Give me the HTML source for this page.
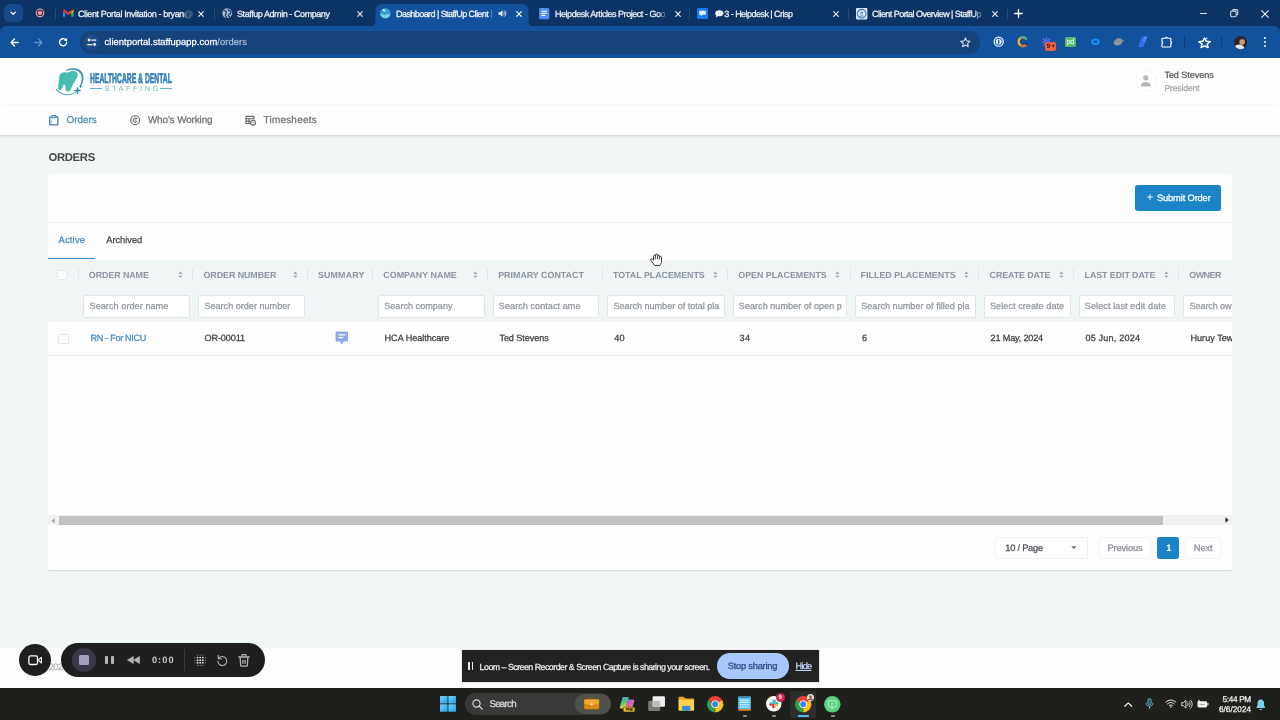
<!DOCTYPE html>
<html lang="en">
<head>
<meta charset="utf-8">
<title>Dashboard | StaffUp Client Portal</title>
<style>
html,body{margin:0;padding:0;background:#f1f6f6;}
body{text-rendering:geometricPrecision;width:1280px;height:720px;overflow:hidden;font-family:'Liberation Sans',sans-serif;}
#screen{will-change:transform;position:relative;width:1280px;height:720px;overflow:hidden;background:#f1f6f6;}
.a{position:absolute;box-sizing:border-box;}
.t{position:absolute;white-space:pre;margin:0;padding:0;-webkit-text-stroke:0.25px currentColor;}
svg{overflow:visible;}
.g{position:absolute;left:0;top:0;width:0;height:0;display:block;}

</style>
</head>
<body>
<div id="screen">
<main class="g" id="page" aria-label="Client portal">
<div class="a " style="left:0px;top:57px;width:1280px;height:48px;background:#fdfdfd;"></div>
<div class="a " style="left:0px;top:104.5px;width:1280px;height:1px;background:#f0f1f3;"></div>
<svg class="a" style="left:50px;top:62px" width="40" height="40" viewBox="0 0 40 40"><path d="M16 8.2 C22 5 29 6 32 10.5 C34.8 15 33.6 21 30.4 24.2 L29.7 23.5 C31.9 20.4 32.6 15.6 30.5 11.7 C28 7.5 22 6.7 16.4 8.9 Z" fill="#3a8fb8"/><path d="M6.2 27.4 C9 31.4 15 33.4 20 32.6 C22.4 32.2 24.4 31.2 25.6 30.2" fill="none" stroke="#55aeae" stroke-width="1.05" stroke-linecap="round"/><path d="M9.3 14.5 C9.5 11.5 12.5 9.8 15 10.2 C16.5 10.4 17.5 10.6 18.5 10.2 C21 9 24 8.6 26.2 9.8 C28 10.8 28.2 13 27.2 15.2 C25.8 18.4 23.4 21 22 24.5 C21.2 26.6 20.6 28.4 19 29.2 C17.4 29.9 16 29 15.6 27.2 C15.3 25.6 15.6 23.6 14.8 22.8 C14 22 13.4 23.2 12.8 24.6 C12.2 26.2 11.4 27.8 10 28 C8.6 28.2 8 26.8 8.1 25 C8.3 22 9.1 18 9.3 14.5 Z" fill="#45bdb0"/><path d="M27.5 26 V31.2 M24.9 28.6 H30.1" stroke="#2a86b8" stroke-width="1.5" stroke-linecap="round"/><path d="M30.7 23.4 V25.6 M29.6 24.5 H31.8" stroke="#2a86b8" stroke-width="0.8" stroke-linecap="round"/></svg>
<span class="t" style="left:90px;top:70px;font-size:13.9px;line-height:16px;color:#3380bc;font-weight:700;-webkit-text-stroke:0;transform:scaleX(0.4883);transform-origin:0 50%;-webkit-text-stroke:0.7px #3380bc;">HEALTHCARE &amp; DENTAL</span>
<div class="a " style="left:90.2px;top:88.1px;width:11.4px;height:1.1px;background:#63b3cf;"></div>
<div class="a " style="left:159.8px;top:88.1px;width:12.1px;height:1.1px;background:#63b3cf;"></div>
<span class="t" style="left:104.4px;top:84.1px;font-size:7.4px;line-height:10px;color:#72bfac;letter-spacing:2.57px;-webkit-text-stroke:0;">STAFFING</span>
<svg class="a" style="left:1134.9px;top:70.4px" width="21.6" height="21.6" viewBox="0 0 43 43"><circle cx="21.5" cy="21.5" r="20.6" fill="#fff" stroke="#f0f1f3" stroke-width="1.6"/><circle cx="21.5" cy="15.6" r="5.2" fill="#b6b6ba"/><path d="M12 30.5 C12 21.8 31 21.8 31 30.5 V31.4 C31 32.4 30.4 32.9 29.4 32.9 H13.6 C12.6 32.9 12 32.4 12 31.4 Z" fill="#b6b6ba"/></svg>
<span class="t" style="left:1164.4px;top:69.1px;font-size:9.1px;line-height:13px;color:#55595e;letter-spacing:-0.06px;">Ted Stevens</span>
<span class="t" style="left:1164.4px;top:82.4px;font-size:8.7px;line-height:12px;color:#a2a5aa;letter-spacing:-0.19px;">President</span>
<div class="a " style="left:0px;top:105.4px;width:1280px;height:29.6px;background:#fdfdfd;box-shadow:0 1px 2.5px rgba(60,70,80,.22);"></div>
<svg class="a" style="left:48.8px;top:114.6px" width="9.6" height="10.6" viewBox="0 0 19.2 21.2"><rect x="1.5" y="4" width="16.2" height="15.8" rx="1.4" fill="none" stroke="#3a7fb6" stroke-width="2.6"/><rect x="5.6" y="1.2" width="8" height="4.4" rx="1.2" fill="#fff" stroke="#3a7fb6" stroke-width="2.2"/><path d="M5.4 9.4 V15.4" stroke="#3a7fb6" stroke-width="1.6" opacity=".6"/></svg>
<span class="t" style="left:66.6px;top:113.7px;font-size:9.9px;line-height:14px;color:#4889be;letter-spacing:-0.04px;">Orders</span>
<svg class="a" style="left:129.7px;top:114.7px" width="10.4" height="10.4" viewBox="0 0 21 21"><circle cx="10.5" cy="10.5" r="9" fill="none" stroke="#65696e" stroke-width="2.3"/><path d="M13.8 7.4 A4.4 4.4 0 1 0 13.8 13.6" fill="none" stroke="#65696e" stroke-width="2.1" stroke-linecap="round"/><path d="M10.6 8.2 V11 H12.8" fill="none" stroke="#65696e" stroke-width="1.5"/></svg>
<span class="t" style="left:147.9px;top:113.7px;font-size:9.9px;line-height:14px;color:#6b6f74;letter-spacing:-0.1px;">Who&#x27;s Working</span>
<svg class="a" style="left:245.2px;top:114.6px" width="11.2" height="10.8" viewBox="0 0 23 22"><path d="M2 2.6 H18.4 V8.6 M2 2.6 V17.4 H10 M2 7.6 H18.4 M2 12.4 H10.4 M8.4 7.6 V17.4" fill="none" stroke="#65696e" stroke-width="2.5" stroke-linejoin="round"/><circle cx="16.6" cy="15.6" r="5" fill="#fff" stroke="#65696e" stroke-width="2.3"/><path d="M16.6 13 V15.8 L18.6 17" fill="none" stroke="#65696e" stroke-width="1.6"/></svg>
<span class="t" style="left:263.5px;top:113.7px;font-size:9.9px;line-height:14px;color:#6b6f74;letter-spacing:0.27px;">Timesheets</span>
<span class="t" style="left:48.4px;top:149.9px;font-size:11.3px;line-height:16px;color:#484848;font-weight:700;-webkit-text-stroke:0;letter-spacing:-0.29px;">ORDERS</span>
<div class="a " style="left:48px;top:174.2px;width:1184px;height:396px;background:#fdfdfd;border-radius:2px;box-shadow:0 1px 1px -0.5px rgba(60,80,100,.16);"></div>
<div class="a " style="left:48px;top:221.6px;width:1184px;height:1px;background:#eceff1;"></div>
<div class="a " style="left:1135.4px;top:184.8px;width:85.8px;height:26.2px;background:#1c84c6;border-radius:2.4px;"></div>
<svg class="a" style="left:1147.2px;top:194px" width="6" height="6" viewBox="0 0 6 6"><path d="M3 0.2 V5.8 M0.2 3 H5.8" stroke="#fff" stroke-width="0.9"/></svg>
<span class="t" style="left:1157px;top:191.8px;font-size:9.3px;line-height:13px;color:#ffffff;letter-spacing:-0.14px;">Submit Order</span>
<div class="a " style="left:0px;top:647.5px;width:1280px;height:41px;background:#fdfdfd;"></div>
<span class="t" style="left:48.7px;top:661.3px;font-size:9.2px;line-height:13px;color:#b4b7bc;letter-spacing:-0.52px;">2024</span>
</main>
<section class="g" id="orders-table" aria-label="Orders">
<span class="t" style="left:58.5px;top:234.4px;font-size:9.3px;line-height:13px;color:#4889be;letter-spacing:0.23px;">Active</span>
<span class="t" style="left:106.3px;top:234.4px;font-size:9.3px;line-height:13px;color:#43474c;letter-spacing:-0.04px;">Archived</span>
<div class="a " style="left:48px;top:257.8px;width:47.4px;height:1.4px;background:#2f86c4;"></div>
<div class="a " style="left:48px;top:259.6px;width:1184px;height:62.6px;background:#f0f5f6;"></div>
<div class="a " style="left:77.7px;top:268.4px;width:1px;height:12.6px;background:#e3e8ec;"></div>
<span class="t" style="left:88.8px;top:268.6px;font-size:8.9px;line-height:12px;color:#8c93a0;font-weight:700;-webkit-text-stroke:0;letter-spacing:-0.07px;">ORDER NAME</span>
<svg class="a" style="left:178.4px;top:270.9px" width="4.8" height="7.6" viewBox="0 0 4.8 7.6"><path d="M0.3 3 L2.4 0.5 L4.5 3 Z M0.3 4.6 L2.4 7.1 L4.5 4.6 Z" fill="#a3a9b3"/></svg>
<div class="a " style="left:192.1px;top:268.4px;width:1px;height:12.6px;background:#e3e8ec;"></div>
<span class="t" style="left:203.5px;top:268.6px;font-size:8.9px;line-height:12px;color:#8c93a0;font-weight:700;-webkit-text-stroke:0;letter-spacing:-0.06px;">ORDER NUMBER</span>
<svg class="a" style="left:292.90000000000003px;top:270.9px" width="4.8" height="7.6" viewBox="0 0 4.8 7.6"><path d="M0.3 3 L2.4 0.5 L4.5 3 Z M0.3 4.6 L2.4 7.1 L4.5 4.6 Z" fill="#a3a9b3"/></svg>
<div class="a " style="left:307.1px;top:268.4px;width:1px;height:12.6px;background:#e3e8ec;"></div>
<span class="t" style="left:318px;top:268.6px;font-size:8.9px;line-height:12px;color:#8c93a0;font-weight:700;-webkit-text-stroke:0;letter-spacing:0.13px;">SUMMARY</span>
<div class="a " style="left:372.1px;top:268.4px;width:1px;height:12.6px;background:#e3e8ec;"></div>
<span class="t" style="left:383.3px;top:268.6px;font-size:8.9px;line-height:12px;color:#8c93a0;font-weight:700;-webkit-text-stroke:0;letter-spacing:0.03px;">COMPANY NAME</span>
<svg class="a" style="left:472.8px;top:270.9px" width="4.8" height="7.6" viewBox="0 0 4.8 7.6"><path d="M0.3 3 L2.4 0.5 L4.5 3 Z M0.3 4.6 L2.4 7.1 L4.5 4.6 Z" fill="#a3a9b3"/></svg>
<div class="a " style="left:487.1px;top:268.4px;width:1px;height:12.6px;background:#e3e8ec;"></div>
<span class="t" style="left:498.2px;top:268.6px;font-size:8.9px;line-height:12px;color:#8c93a0;font-weight:700;-webkit-text-stroke:0;">PRIMARY CONTACT</span>
<div class="a " style="left:601.6px;top:268.4px;width:1px;height:12.6px;background:#e3e8ec;"></div>
<span class="t" style="left:613px;top:268.6px;font-size:8.9px;line-height:12px;color:#8c93a0;font-weight:700;-webkit-text-stroke:0;letter-spacing:-0.03px;">TOTAL PLACEMENTS</span>
<svg class="a" style="left:713.2px;top:270.9px" width="4.8" height="7.6" viewBox="0 0 4.8 7.6"><path d="M0.3 3 L2.4 0.5 L4.5 3 Z M0.3 4.6 L2.4 7.1 L4.5 4.6 Z" fill="#a3a9b3"/></svg>
<div class="a " style="left:727.1px;top:268.4px;width:1px;height:12.6px;background:#e3e8ec;"></div>
<span class="t" style="left:738.3px;top:268.6px;font-size:8.9px;line-height:12px;color:#8c93a0;font-weight:700;-webkit-text-stroke:0;letter-spacing:-0.02px;">OPEN PLACEMENTS</span>
<svg class="a" style="left:835.2px;top:270.9px" width="4.8" height="7.6" viewBox="0 0 4.8 7.6"><path d="M0.3 3 L2.4 0.5 L4.5 3 Z M0.3 4.6 L2.4 7.1 L4.5 4.6 Z" fill="#a3a9b3"/></svg>
<div class="a " style="left:850.3px;top:268.4px;width:1px;height:12.6px;background:#e3e8ec;"></div>
<span class="t" style="left:860.6px;top:268.6px;font-size:8.9px;line-height:12px;color:#8c93a0;font-weight:700;-webkit-text-stroke:0;letter-spacing:0.02px;">FILLED PLACEMENTS</span>
<svg class="a" style="left:963.8000000000001px;top:270.9px" width="4.8" height="7.6" viewBox="0 0 4.8 7.6"><path d="M0.3 3 L2.4 0.5 L4.5 3 Z M0.3 4.6 L2.4 7.1 L4.5 4.6 Z" fill="#a3a9b3"/></svg>
<div class="a " style="left:978.3px;top:268.4px;width:1px;height:12.6px;background:#e3e8ec;"></div>
<span class="t" style="left:989.6px;top:268.6px;font-size:8.9px;line-height:12px;color:#8c93a0;font-weight:700;-webkit-text-stroke:0;letter-spacing:-0.1px;">CREATE DATE</span>
<svg class="a" style="left:1058.8px;top:270.9px" width="4.8" height="7.6" viewBox="0 0 4.8 7.6"><path d="M0.3 3 L2.4 0.5 L4.5 3 Z M0.3 4.6 L2.4 7.1 L4.5 4.6 Z" fill="#a3a9b3"/></svg>
<div class="a " style="left:1073.3px;top:268.4px;width:1px;height:12.6px;background:#e3e8ec;"></div>
<span class="t" style="left:1084.6px;top:268.6px;font-size:8.9px;line-height:12px;color:#8c93a0;font-weight:700;-webkit-text-stroke:0;letter-spacing:-0.08px;">LAST EDIT DATE</span>
<svg class="a" style="left:1163.6px;top:270.9px" width="4.8" height="7.6" viewBox="0 0 4.8 7.6"><path d="M0.3 3 L2.4 0.5 L4.5 3 Z M0.3 4.6 L2.4 7.1 L4.5 4.6 Z" fill="#a3a9b3"/></svg>
<div class="a " style="left:1178.3px;top:268.4px;width:1px;height:12.6px;background:#e3e8ec;"></div>
<span class="t" style="left:1189.2px;top:268.6px;font-size:8.9px;line-height:12px;color:#8c93a0;font-weight:700;-webkit-text-stroke:0;letter-spacing:-0.46px;">OWNER</span>
<div class="a " style="left:57.1px;top:269.8px;width:10.4px;height:10.4px;background:#ffffff;border:1px solid #e3e6ea;border-radius:1.6px;"></div>
<div class="a " style="left:83.2px;top:295.4px;width:106.39999999999999px;height:22.2px;background:#ffffff;border:1px solid #e2e6ea;border-radius:2px;overflow:hidden;"></div>
<span class="t" style="left:89.5px;top:300.4px;font-size:9.1px;line-height:13px;color:#90969e;letter-spacing:0.06px;">Search order name</span>
<div class="a " style="left:198.2px;top:295.4px;width:106.40000000000003px;height:22.2px;background:#ffffff;border:1px solid #e2e6ea;border-radius:2px;overflow:hidden;"></div>
<span class="t" style="left:204.4px;top:300.4px;font-size:9.1px;line-height:13px;color:#90969e;">Search order number</span>
<div class="a " style="left:378.2px;top:295.4px;width:106.40000000000003px;height:22.2px;background:#ffffff;border:1px solid #e2e6ea;border-radius:2px;overflow:hidden;"></div>
<span class="t" style="left:384.2px;top:300.4px;font-size:9.1px;line-height:13px;color:#90969e;letter-spacing:0.01px;">Search company</span>
<div class="a " style="left:493px;top:295.4px;width:106.29999999999995px;height:22.2px;background:#ffffff;border:1px solid #e2e6ea;border-radius:2px;overflow:hidden;"></div>
<span class="t" style="left:498.8px;top:300.4px;font-size:9.1px;line-height:13px;color:#90969e;letter-spacing:0.05px;">Search contact ame</span>
<div class="a " style="left:607.4px;top:295.4px;width:117.20000000000005px;height:22.2px;background:#ffffff;border:1px solid #e2e6ea;border-radius:2px;overflow:hidden;"></div>
<span class="t" style="left:613.4px;top:300.4px;font-size:9.1px;line-height:13px;color:#90969e;letter-spacing:-0.03px;width:109.70000000000005px;overflow:hidden;">Search number of total pla</span>
<div class="a " style="left:733px;top:295.4px;width:114px;height:22.2px;background:#ffffff;border:1px solid #e2e6ea;border-radius:2px;overflow:hidden;"></div>
<span class="t" style="left:738.8px;top:300.4px;font-size:9.1px;line-height:13px;color:#90969e;letter-spacing:0.02px;width:106.70000000000005px;overflow:hidden;">Search number of open p</span>
<div class="a " style="left:855.4px;top:295.4px;width:120.20000000000005px;height:22.2px;background:#ffffff;border:1px solid #e2e6ea;border-radius:2px;overflow:hidden;"></div>
<span class="t" style="left:861.2px;top:300.4px;font-size:9.1px;line-height:13px;color:#90969e;letter-spacing:0.01px;width:112.89999999999998px;overflow:hidden;">Search number of filled pla</span>
<div class="a " style="left:984.2px;top:295.4px;width:86.39999999999986px;height:22.2px;background:#ffffff;border:1px solid #e2e6ea;border-radius:2px;overflow:hidden;"></div>
<span class="t" style="left:990px;top:300.4px;font-size:9.1px;line-height:13px;color:#90969e;letter-spacing:0.05px;">Select create date</span>
<div class="a " style="left:1078.8px;top:295.4px;width:96.20000000000005px;height:22.2px;background:#ffffff;border:1px solid #e2e6ea;border-radius:2px;overflow:hidden;"></div>
<span class="t" style="left:1084.8px;top:300.4px;font-size:9.1px;line-height:13px;color:#90969e;letter-spacing:0.09px;">Select last edit date</span>
<div class="a " style="left:1183.2px;top:295.4px;width:48.799999999999955px;height:22.2px;background:#ffffff;border:1px solid #e2e6ea;border-radius:2px 0 0 2px;border-right:none;overflow:hidden;"></div>
<span class="t" style="left:1189.6px;top:300.4px;font-size:9.1px;line-height:13px;color:#90969e;letter-spacing:-0.12px;">Search ow</span>
<div class="a " style="left:48px;top:322.2px;width:1184px;height:33px;background:#fdfdfd;"></div>
<div class="a " style="left:48px;top:354.9px;width:1184px;height:1px;background:#eceff2;"></div>
<div class="a " style="left:58.4px;top:333.7px;width:10.4px;height:10.4px;background:#ffffff;border:1px solid #e3e6ea;border-radius:1.6px;"></div>
<span class="t" style="left:90.5px;top:332.1px;font-size:9.1px;line-height:13px;color:#4889be;letter-spacing:-0.31px;">RN - For NICU</span>
<span class="t" style="left:204.6px;top:332.1px;font-size:9.1px;line-height:13px;color:#3a3d41;letter-spacing:-0.13px;">OR-00011</span>
<svg class="a" style="left:334.6px;top:331.2px" width="13.6" height="14.4" viewBox="0 0 27 29"><path d="M3 1 H24 C25.4 1 26 1.8 26 3 V19 C26 20.4 25.4 21 24 21 H17.5 L13.5 27.5 L9.5 21 H3 C1.8 21 1 20.4 1 19 V3 C1 1.8 1.8 1 3 1 Z" fill="#8da8e6"/><path d="M6.5 8 H20.5 M6.5 13.4 H16" stroke="#fff" stroke-width="2.4"/></svg>
<span class="t" style="left:384.6px;top:332.1px;font-size:9.1px;line-height:13px;color:#3a3d41;letter-spacing:-0.04px;">HCA Healthcare</span>
<span class="t" style="left:499.4px;top:332.1px;font-size:9.1px;line-height:13px;color:#3a3d41;letter-spacing:-0.06px;">Ted Stevens</span>
<span class="t" style="left:614.2px;top:332.1px;font-size:9.1px;line-height:13px;color:#3a3d41;letter-spacing:0.27px;">40</span>
<span class="t" style="left:739.6px;top:332.1px;font-size:9.1px;line-height:13px;color:#3a3d41;letter-spacing:0.27px;">34</span>
<span class="t" style="left:862px;top:332.1px;font-size:9.1px;line-height:13px;color:#3a3d41;">6</span>
<span class="t" style="left:990.6px;top:332.1px;font-size:9.1px;line-height:13px;color:#3a3d41;letter-spacing:-0.17px;">21 May, 2024</span>
<span class="t" style="left:1085.4px;top:332.1px;font-size:9.1px;line-height:13px;color:#3a3d41;letter-spacing:0.18px;">05 Jun, 2024</span>
<span class="t" style="left:1190.4px;top:332.1px;font-size:9.1px;line-height:13px;color:#3a3d41;letter-spacing:0.03px;width:41.6px;overflow:hidden;">Huruy Tew</span>
<div class="a " style="left:48px;top:515.4px;width:1184px;height:9.8px;background:#f1f1f1;"></div>
<div class="a " style="left:59.4px;top:516px;width:1103.2px;height:8.6px;background:#c1c1c1;"></div>
<svg class="a" style="left:50.6px;top:517.6px" width="4" height="5.6" viewBox="0 0 4 5.6"><path d="M3.6 0.2 V5.4 L0.4 2.8 Z" fill="#a3a3a3"/></svg>
<svg class="a" style="left:1224.6px;top:517.4px" width="4" height="6" viewBox="0 0 4 6"><path d="M0.4 0.2 V5.8 L3.8 3 Z" fill="#303030"/></svg>
<div class="a " style="left:995px;top:536.8px;width:92.6px;height:22.4px;background:#ffffff;border:1px solid #f0f2f4;border-radius:2px;"></div>
<span class="t" style="left:1005.2px;top:542px;font-size:9.3px;line-height:13px;color:#4a4e54;letter-spacing:-0.23px;">10 / Page</span>
<svg class="a" style="left:1071.4px;top:546.4px" width="5.6" height="3.4" viewBox="0 0 5.6 3.4"><path d="M0.2 0.2 H5.4 L2.8 3.2 Z" fill="#6c7075"/></svg>
<div class="a " style="left:1098.8px;top:536.8px;width:52.6px;height:22.4px;background:#ffffff;border:1px solid #f0f2f4;border-radius:2px;"></div>
<span class="t" style="left:1107.6px;top:542px;font-size:9.3px;line-height:13px;color:#878c96;letter-spacing:-0.17px;">Previous</span>
<div class="a " style="left:1157.4px;top:536.6px;width:21.8px;height:22.6px;background:#1c84c6;border-radius:2.4px;"></div>
<span class="t" style="left:1166.2px;top:541.8px;font-size:9.3px;line-height:13px;color:#ffffff;font-weight:700;-webkit-text-stroke:0;">1</span>
<div class="a " style="left:1185px;top:536.8px;width:36.4px;height:22.4px;background:#ffffff;border:1px solid #f0f2f4;border-radius:2px;"></div>
<span class="t" style="left:1193.8px;top:542px;font-size:9.3px;line-height:13px;color:#878c96;letter-spacing:-0.11px;">Next</span>
<svg class="a" style="left:650.2px;top:252.8px" width="13" height="13.4" viewBox="0 0 13 13.4"><path d="M4.9 12.6 C3.6 11.2 2.4 9 0.9 7.5 C0.1 6.5 1.1 5.3 2.3 6.1 L3.6 7.2 V3.3 C3.6 2.1 5.2 2.1 5.4 3.3 V2.1 C5.4 0.7 7.4 0.7 7.4 2.1 V2.8 C7.6 1.6 9.4 1.6 9.4 3 V4 C9.6 3 11.5 3 11.5 4.4 V8.2 C11.5 10.2 10.7 11.4 9.7 12.6 Z" fill="#ffffff" stroke="#303030" stroke-width="1" stroke-linejoin="round"/><path d="M5.4 3.2 V6.2 M7.4 2.8 V6.2 M9.4 3.8 V6.4" stroke="#303030" stroke-width="0.9"/></svg>
</section>
<aside class="g" id="recorder-overlays" aria-label="Loom recorder">
<div class="a " style="left:19px;top:644.2px;width:31.8px;height:31.8px;background:#1f1f1f;border-radius:50%;"></div>
<svg class="a" style="left:27.6px;top:654.6px" width="14.4" height="10.4" viewBox="0 0 14.4 10.4"><rect x="0.9" y="0.9" width="8.6" height="8.6" rx="1.6" fill="none" stroke="#fff" stroke-width="1.3"/><path d="M10 5.2 L13.4 2.4 V8 Z" fill="none" stroke="#fff" stroke-width="1.1" stroke-linejoin="round"/></svg>
<div class="a " style="left:61.4px;top:642.9px;width:203.2px;height:33.8px;background:#1f1f1f;border-radius:16.9px;"></div>
<div class="a " style="left:72.4px;top:648.4px;width:23.2px;height:23.2px;background:#393747;border-radius:50%;"></div>
<div class="a " style="left:78.7px;top:654.7px;width:10.6px;height:10.6px;background:#a5a1ba;border-radius:1.2px;"></div>
<div class="a " style="left:105px;top:655.6px;width:2.9px;height:8.9px;background:#b4b4b6;border-radius:0.8px;"></div>
<div class="a " style="left:110.8px;top:655.6px;width:2.9px;height:8.9px;background:#b4b4b6;border-radius:0.8px;"></div>
<svg class="a" style="left:126.8px;top:656.2px" width="13" height="8" viewBox="0 0 13 8"><path d="M6.4 0.3 V7.7 L0.4 4 Z M12.6 0.3 V7.7 L6.6 4 Z" fill="#b4b4b6" stroke="#b4b4b6" stroke-width="0.5" stroke-linejoin="round"/></svg>
<span class="t" style="left:151.9px;top:653.9px;font-size:9.2px;line-height:13px;color:#cfcfd1;font-weight:700;-webkit-text-stroke:0;letter-spacing:1.07px;">0:00</span>
<div class="a " style="left:184.2px;top:649.4px;width:1px;height:21.6px;background:#3a3a3c;"></div>
<svg class="a" style="left:194.4px;top:653.8px" width="12.4" height="12.4" viewBox="0 0 12.4 12.4"><circle cx="3.60" cy="1.00" r="0.55" fill="#d8d8da" opacity="0.75"/><circle cx="6.20" cy="1.00" r="0.55" fill="#d8d8da" opacity="0.75"/><circle cx="8.80" cy="1.00" r="0.55" fill="#d8d8da" opacity="0.75"/><circle cx="1.00" cy="3.60" r="0.55" fill="#d8d8da" opacity="0.75"/><circle cx="3.60" cy="3.60" r="0.95" fill="#d8d8da" opacity="1"/><circle cx="6.20" cy="3.60" r="0.95" fill="#d8d8da" opacity="1"/><circle cx="8.80" cy="3.60" r="0.95" fill="#d8d8da" opacity="1"/><circle cx="11.40" cy="3.60" r="0.55" fill="#d8d8da" opacity="0.75"/><circle cx="1.00" cy="6.20" r="0.55" fill="#d8d8da" opacity="0.75"/><circle cx="3.60" cy="6.20" r="0.95" fill="#d8d8da" opacity="1"/><circle cx="6.20" cy="6.20" r="0.95" fill="#d8d8da" opacity="1"/><circle cx="8.80" cy="6.20" r="0.95" fill="#d8d8da" opacity="1"/><circle cx="11.40" cy="6.20" r="0.55" fill="#d8d8da" opacity="0.75"/><circle cx="1.00" cy="8.80" r="0.55" fill="#d8d8da" opacity="0.75"/><circle cx="3.60" cy="8.80" r="0.95" fill="#d8d8da" opacity="1"/><circle cx="6.20" cy="8.80" r="0.95" fill="#d8d8da" opacity="1"/><circle cx="8.80" cy="8.80" r="0.95" fill="#d8d8da" opacity="1"/><circle cx="11.40" cy="8.80" r="0.55" fill="#d8d8da" opacity="0.75"/><circle cx="3.60" cy="11.40" r="0.55" fill="#d8d8da" opacity="0.75"/><circle cx="6.20" cy="11.40" r="0.55" fill="#d8d8da" opacity="0.75"/><circle cx="8.80" cy="11.40" r="0.55" fill="#d8d8da" opacity="0.75"/></svg>
<svg class="a" style="left:216px;top:653.6px" width="12" height="12" viewBox="0 0 24 24"><path d="M5.6 8.4 A9 9 0 1 1 3.6 14.6" fill="none" stroke="#b4b4b6" stroke-width="2.2" stroke-linecap="round"/><path d="M4.6 2.6 V9.4 H11.4" fill="none" stroke="#b4b4b6" stroke-width="2.2" stroke-linecap="round" stroke-linejoin="round"/></svg>
<svg class="a" style="left:237.6px;top:653.6px" width="12" height="13" viewBox="0 0 24 26"><path d="M1.6 6 H22.4 M8 5.4 V2.6 C8 1.8 8.6 1.4 9.2 1.4 H14.8 C15.4 1.4 16 1.8 16 2.6 V5.4" fill="none" stroke="#b4b4b6" stroke-width="2.6" stroke-linecap="round"/><path d="M4.4 6.4 L5.2 22.4 C5.3 23.6 6 24.4 7.2 24.4 H16.8 C18 24.4 18.7 23.6 18.8 22.4 L19.6 6.4" fill="none" stroke="#b4b4b6" stroke-width="2.6"/><path d="M9.8 11.4 V19.4 M14.2 11.4 V19.4" stroke="#b4b4b6" stroke-width="2.6"/></svg>
<div class="a " style="left:461.7px;top:649.8px;width:357.3px;height:32.2px;background:#222222;box-shadow:0 0 1.5px rgba(0,0,0,.3);"></div>
<div class="a " style="left:468.2px;top:662.1px;width:1.5px;height:7.8px;background:#e8e8e8;"></div>
<div class="a " style="left:471.7px;top:662.1px;width:1.5px;height:7.8px;background:#e8e8e8;"></div>
<span class="t" style="left:479.6px;top:660.6px;font-size:8.8px;line-height:12px;color:#ededed;letter-spacing:-0.5px;">Loom – Screen Recorder &amp; Screen Capture is sharing your screen.</span>
<div class="a " style="left:717px;top:653.2px;width:72.2px;height:25.6px;background:#a8c7fa;border-radius:12.8px;"></div>
<span class="t" style="left:727.8px;top:660.3px;font-size:9.3px;line-height:13px;color:#2a4878;letter-spacing:-0.24px;">Stop sharing</span>
<span class="t" style="left:795.5px;top:660.3px;font-size:9.2px;line-height:13px;color:#c3d6f7;letter-spacing:-0.74px;text-decoration:underline;">Hide</span>
</aside>
<header class="g" id="browser-chrome" aria-label="Browser window">
<div class="a " style="left:0px;top:0px;width:1280px;height:34px;background:#0b3363;"></div>
<div class="a " style="left:0px;top:26.2px;width:1280px;height:31.6px;background:#12519b;border-radius:6px 6px 0 0;"></div>
<svg class="a" style="left:366px;top:3px" width="172" height="24" viewBox="0 0 172 24"><path d="M2 24 C7.5 24 9.5 21.5 9.5 17 V8 C9.5 3.5 12 1 16.5 1 H155.5 C160 1 162.5 3.5 162.5 8 V17 C162.5 21.5 164.5 24 170 24 Z" fill="#12519b"/></svg>
<div class="a " style="left:4px;top:3.8px;width:18.6px;height:18.6px;background:#16498c;border-radius:5px;"></div>
<svg class="a" style="left:10.3px;top:11.2px" width="6.4" height="4.6" viewBox="0 0 6.4 4.6"><path d="M1 1.1 L3.2 3.3 L5.4 1.1" fill="none" stroke="#fff" stroke-width="1.3" stroke-linecap="round" stroke-linejoin="round"/></svg>
<svg class="a" style="left:35px;top:8.4px" width="10" height="10" viewBox="0 0 10 10"><circle cx="5" cy="4.9" r="4.3" fill="#d9bcc6"/><circle cx="5" cy="4.9" r="3.3" fill="#5b2233"/><circle cx="5" cy="4.9" r="2.2" fill="#ea98a4"/></svg>
<div class="a " style="left:54.9px;top:8.5px;width:1px;height:10px;background:#2a4f80;"></div>
<svg class="a" style="left:63px;top:9px" width="10.5" height="8.5" viewBox="0 0 21 17"><path d="M0 2 V15.5 H4.5 V6.5 Z" fill="#4285f4"/><path d="M21 2 V15.5 H16.5 V6.5 Z" fill="#34a853"/><path d="M0 2.2 L0 4 L10.5 12 L21 4 L21 2.2 L18.6 0.8 L10.5 7 L2.4 0.8 Z" fill="#ea4335"/><path d="M16.5 6.5 L21 2.5 V6 L16.5 9.5Z" fill="#fbbc04"/><path d="M4.5 6.5 L0 2.5 V6 L4.5 9.5Z" fill="#c5221f"/></svg>
<span class="t" style="left:78px;top:7.6px;font-size:9px;line-height:13px;color:#eef2f8;letter-spacing:-0.38px;-webkit-text-stroke:0.25px currentColor;-webkit-mask-image:linear-gradient(to right,#000 105.5px,rgba(0,0,0,0.3) 108.5px);mask-image:linear-gradient(to right,#000 105.5px,rgba(0,0,0,0.3) 108.5px);">Client Portal Invitation - bryan@</span>
<svg class="a" style="left:197.2px;top:9.6px" width="8" height="8" viewBox="-4 -4 8 8"><path d="M-2.3 -2.3 L2.3 2.3 M2.3 -2.3 L-2.3 2.3" stroke="#e6ebf2" stroke-width="1.15" stroke-linecap="round"/></svg>
<div class="a " style="left:213.5px;top:8.5px;width:1px;height:10px;background:#2a4f80;"></div>
<svg class="a" style="left:221.5px;top:8.3px" width="10.4" height="10.4" viewBox="0 0 20 20"><circle cx="10" cy="10" r="9.4" fill="#a9b8cc"/><path d="M3 6 C6 4 8 6 8.5 8.5 C9 11 6 11.5 6.5 14 C7 16 9 17 9.5 19 M12 1.5 C11 4 13 5 15 5.5 C17 6 17.5 8 16.5 10 C15.5 12 13 11.5 12.5 13.5 C12 15.5 14 16.5 15.5 16.5" fill="none" stroke="#0f3563" stroke-width="2.2"/></svg>
<span class="t" style="left:237px;top:7.6px;font-size:9px;line-height:13px;color:#eef2f8;letter-spacing:-0.43px;-webkit-text-stroke:0.25px currentColor;">Staffup Admin - Company</span>
<svg class="a" style="left:356.2px;top:9.6px" width="8" height="8" viewBox="-4 -4 8 8"><path d="M-2.3 -2.3 L2.3 2.3 M2.3 -2.3 L-2.3 2.3" stroke="#e6ebf2" stroke-width="1.15" stroke-linecap="round"/></svg>
<svg class="a" style="left:380px;top:8.1px" width="10.6" height="10.6" viewBox="0 0 20 20"><circle cx="10" cy="10" r="10" fill="#2f9fd0"/><path d="M0.5 12 C4 9 8 15 12 12.5 C15 10.8 17.5 11.5 19.6 12.5 A10 10 0 0 1 0.5 12Z" fill="#74d3d8"/><path d="M6 2 C9 2.5 11.5 5 10.5 8.5 C9.5 6.5 7.5 5.5 5 6 Z" fill="#dff4f6"/></svg>
<span class="t" style="left:396px;top:7.6px;font-size:9px;line-height:13px;color:#f4f7fb;letter-spacing:-0.56px;-webkit-text-stroke:0.25px currentColor;">Dashboard | StaffUp Client</span>
<div class="a " style="left:490.8px;top:9.5px;width:1px;height:8.5px;background:#5f86b8;"></div>
<svg class="a" style="left:498.4px;top:9.2px" width="9" height="9" viewBox="0 0 18 18"><path d="M1 6.5 H4.5 L9 2.5 V15.5 L4.5 11.5 H1 Z" fill="#eef3fa"/><path d="M11.5 6 C13 7.5 13 10.5 11.5 12 M13.5 3.5 C16.6 6.5 16.6 11.5 13.5 14.5" fill="none" stroke="#eef3fa" stroke-width="1.7" stroke-linecap="round"/></svg>
<svg class="a" style="left:514.7px;top:9.6px" width="8" height="8" viewBox="-4 -4 8 8"><path d="M-2.3 -2.3 L2.3 2.3 M2.3 -2.3 L-2.3 2.3" stroke="#ffffff" stroke-width="1.15" stroke-linecap="round"/></svg>
<svg class="a" style="left:538.8px;top:8px" width="10.4" height="11.2" viewBox="0 0 20 22"><rect width="20" height="22" rx="2.5" fill="#4f8df5"/><path d="M4.5 6.5 H15.5 M4.5 10.5 H15.5 M4.5 14.5 H12" stroke="#fff" stroke-width="2"/></svg>
<span class="t" style="left:555px;top:7.6px;font-size:9px;line-height:13px;color:#eef2f8;letter-spacing:-0.47px;-webkit-text-stroke:0.25px currentColor;-webkit-mask-image:linear-gradient(to right,#000 104px,rgba(0,0,0,0.38) 107.5px);mask-image:linear-gradient(to right,#000 104px,rgba(0,0,0,0.38) 107.5px);">Helpdesk Articles Project - Goo</span>
<svg class="a" style="left:673.5px;top:9.6px" width="8" height="8" viewBox="-4 -4 8 8"><path d="M-2.3 -2.3 L2.3 2.3 M2.3 -2.3 L-2.3 2.3" stroke="#e6ebf2" stroke-width="1.15" stroke-linecap="round"/></svg>
<div class="a " style="left:689.0px;top:8.5px;width:1px;height:10px;background:#2a4f80;"></div>
<svg class="a" style="left:697px;top:8px" width="11" height="11" viewBox="0 0 22 22"><rect width="22" height="22" rx="3" fill="#1a7bf0"/><path d="M4.5 5.5 H17.5 V13.5 H10.5 L7.5 16.5 V13.5 H4.5 Z" fill="#e9f3ff"/></svg>
<svg class="a" style="left:714.8px;top:9.8px" width="8.6" height="7.6" viewBox="0 0 17 15"><ellipse cx="8.5" cy="6.5" rx="8" ry="6" fill="#f3f6fa"/><path d="M3 9 L1.5 14.5 L8 11.5 Z" fill="#f3f6fa"/></svg>
<span class="t" style="left:724.3px;top:7.6px;font-size:9px;line-height:13px;color:#eef2f8;letter-spacing:-0.54px;-webkit-text-stroke:0.25px currentColor;">3 - Helpdesk | Crisp</span>
<svg class="a" style="left:832.2px;top:9.6px" width="8" height="8" viewBox="-4 -4 8 8"><path d="M-2.3 -2.3 L2.3 2.3 M2.3 -2.3 L-2.3 2.3" stroke="#e6ebf2" stroke-width="1.15" stroke-linecap="round"/></svg>
<div class="a " style="left:847.7px;top:8.5px;width:1px;height:10px;background:#2a4f80;"></div>
<svg class="a" style="left:855.6px;top:8px" width="11.4" height="11.4" viewBox="0 0 22 22"><rect width="22" height="22" rx="2" fill="#dfe9f3"/><circle cx="11" cy="11" r="8.3" fill="none" stroke="#3b79b8" stroke-width="2.2"/><circle cx="11" cy="9.5" r="3" fill="#6fa7d6"/><path d="M5.5 17 C6.5 13 15.5 13 16.5 17 Z" fill="#6fa7d6"/></svg>
<span class="t" style="left:872px;top:7.6px;font-size:9px;line-height:13px;color:#eef2f8;letter-spacing:-0.54px;-webkit-text-stroke:0.25px currentColor;-webkit-mask-image:linear-gradient(to right,#000 103px,rgba(0,0,0,0.45) 106.5px);mask-image:linear-gradient(to right,#000 103px,rgba(0,0,0,0.45) 106.5px);">Client Portal Overview | StaffUp</span>
<svg class="a" style="left:990.6px;top:9.6px" width="8" height="8" viewBox="-4 -4 8 8"><path d="M-2.3 -2.3 L2.3 2.3 M2.3 -2.3 L-2.3 2.3" stroke="#e6ebf2" stroke-width="1.15" stroke-linecap="round"/></svg>
<div class="a " style="left:1006.5px;top:8.5px;width:1px;height:10px;background:#2a4f80;"></div>
<svg class="a" style="left:1014.2px;top:8.9px" width="9" height="9" viewBox="0 0 9 9"><path d="M4.5 0.8 V8.2 M0.8 4.5 H8.2" stroke="#fff" stroke-width="1.4" stroke-linecap="round"/></svg>
<div class="a " style="left:1199.8px;top:13px;width:7.2px;height:1px;background:#d7dee8;"></div>
<svg class="a" style="left:1229.6px;top:9.4px" width="8.4" height="8.4" viewBox="0 0 9 9"><rect x="0.7" y="2.3" width="6" height="6" rx="1.5" fill="none" stroke="#cfd9e8" stroke-width="1.15"/><path d="M2.6 2 V1.9 C2.6 1.1 3.1 0.7 3.8 0.7 H6.8 C7.8 0.7 8.3 1.2 8.3 2.2 V5.2 C8.3 5.9 7.9 6.4 7.1 6.4" fill="none" stroke="#cfd9e8" stroke-width="1.15"/></svg>
<svg class="a" style="left:1260.6px;top:9.5px" width="8" height="8" viewBox="-4 -4 8 8"><path d="M-3.3 -3.3 L3.3 3.3 M3.3 -3.3 L-3.3 3.3" stroke="#e8edf5" stroke-width="1.15" stroke-linecap="round"/></svg>
<svg class="a" style="left:10.4px;top:37.6px" width="9" height="9" viewBox="0 0 10 10"><path d="M5 1.2 L1.2 5 L5 8.8 M1.4 5 H9" fill="none" stroke="#fff" stroke-width="1.5" stroke-linecap="round" stroke-linejoin="round"/></svg>
<svg class="a" style="left:34.2px;top:37.6px" width="9" height="9" viewBox="0 0 10 10"><path d="M5 1.2 L8.8 5 L5 8.8 M8.6 5 H1" fill="none" stroke="#5f91cc" stroke-width="1.5" stroke-linecap="round" stroke-linejoin="round"/></svg>
<svg class="a" style="left:57.6px;top:36.6px" width="10.4" height="10.4" viewBox="0 0 20 20"><path d="M16.6 10 A6.8 6.8 0 1 1 14.4 5" fill="none" stroke="#fff" stroke-width="2.6" stroke-linecap="round"/><path d="M17.6 1.6 V7.6 H11.6 Z" fill="#fff"/></svg>
<div class="a " style="left:80px;top:31px;width:900px;height:22.5px;background:#14427a;border-radius:11.25px;"></div>
<div class="a " style="left:82.6px;top:33.6px;width:17.2px;height:17.2px;background:#1b4a87;border-radius:50%;"></div>
<svg class="a" style="left:86.5px;top:38px" width="9.6" height="8.6" viewBox="0 0 19 17"><path d="M9.5 4 H17.6 M1.4 13 H9.5" stroke="#fff" stroke-width="2.4" stroke-linecap="round"/><circle cx="4" cy="4" r="2.9" fill="#fff"/><circle cx="15" cy="13" r="2.9" fill="#fff"/></svg>
<span class="t" style="left:104.6px;top:35.1px;font-size:9.4px;line-height:13px;color:#ffffff;letter-spacing:0.03px;-webkit-text-stroke:0.25px currentColor;">clientportal.staffupapp.com</span>
<span class="t" style="left:217.3px;top:35.1px;font-size:9.4px;line-height:13px;color:#a9bcd6;letter-spacing:0.09px;">/orders</span>
<svg class="a" style="left:960px;top:36.8px" width="10.8" height="10.8" viewBox="0 0 20 20"><path d="M10 1.6 L12.5 7.2 L18.6 7.8 L14 11.9 L15.3 17.9 L10 14.8 L4.7 17.9 L6 11.9 L1.4 7.8 L7.5 7.2 Z" fill="none" stroke="#cfdaea" stroke-width="2.1" stroke-linejoin="round"/></svg>
<svg class="a" style="left:992.5px;top:36.3px" width="11.4" height="11.4" viewBox="0 0 22 22"><circle cx="11" cy="11" r="10" fill="#f4f7fb"/><circle cx="11" cy="11" r="6.6" fill="none" stroke="#1a5fb4" stroke-width="2"/><rect x="9.6" y="6.6" width="2.8" height="8.8" rx="1.2" fill="#1a5fb4"/></svg>
<svg class="a" style="left:1016.8px;top:36.4px" width="11.4" height="11.4" viewBox="0 0 22 22"><path d="M18.4 6.4 A8.4 8.4 0 1 0 18.4 15.6" fill="none" stroke="#f3b928" stroke-width="4.2"/><path d="M18.4 6.4 A8.4 8.4 0 0 0 6 4.2" fill="none" stroke="#4aa67c" stroke-width="4.2"/><path d="M6.4 18.2 A8.4 8.4 0 0 0 18.4 15.6" fill="none" stroke="#ee6a35" stroke-width="4.2"/><path d="M16 16.6 A8.4 8.4 0 0 0 19.2 13" fill="none" stroke="#1d2f6a" stroke-width="4.2"/></svg>
<svg class="a" style="left:1041.4px;top:35.8px" width="11" height="11" viewBox="0 0 22 22"><circle cx="11" cy="12" r="6.6" fill="#4c62dd"/><path d="M11 1 V6 M3 4 L7 8 M19 4 L15 8 M1 12 H5 M4 20 L7 16.6" stroke="#5a70ea" stroke-width="2.2"/></svg>
<div class="a " style="left:1045px;top:41.8px;width:11.2px;height:9.3px;background:#ef6340;border-radius:2px;"></div>
<span class="t" style="left:1046.6px;top:42.1px;font-size:6.6px;line-height:9px;color:#3a0f06;font-weight:700;-webkit-text-stroke:0;letter-spacing:0.87px;">9+</span>
<div class="a " style="left:1065px;top:36.8px;width:11.2px;height:10.6px;background:#55b765;border-radius:1.2px;"></div>
<span class="t" style="left:1066.6px;top:36.4px;font-size:7.6px;line-height:11px;color:#d9f5df;letter-spacing:-0.45px;">pd</span>
<svg class="a" style="left:1090.5px;top:38.2px" width="9" height="7.6" viewBox="0 0 18 15"><ellipse cx="9" cy="7.5" rx="6.4" ry="4.6" fill="none" stroke="#1f8ff8" stroke-width="4"/></svg>
<svg class="a" style="left:1112.6px;top:37.2px" width="11.6" height="9.6" viewBox="0 0 23 19"><path d="M1 13 C2 6 8 1 13 2 C16 2.6 17 5 20 6 L22.5 8 L19 9 C18.5 14 13 18 7 17 C4 16.5 2 15 1 13 Z" fill="#8a8f96"/><path d="M4 12 C8 13.5 13 12.5 16 9" fill="none" stroke="#c9a98a" stroke-width="1.6"/></svg>
<svg class="a" style="left:1136.6px;top:36.4px" width="11.6" height="11.6" viewBox="0 0 22 22"><path d="M9 1 H19.5 L12.5 21 H2 Z" fill="#2c6fe6"/><path d="M13.6 1 H19.5 L16 11 H10.4 Z" fill="#4a8af5"/></svg>
<svg class="a" style="left:1161.4px;top:35.6px" width="11.6" height="11.6" viewBox="0 0 22 22"><path d="M3.2 4.2 H8.6 C9 2 11.6 2 12 4.2 H17.4 C18.2 4.2 18.7 4.7 18.7 5.5 V11 C20.6 11.3 20.6 13.6 18.7 13.9 V19.5 C18.7 20.3 18.2 20.8 17.4 20.8 H3.2 C2.4 20.8 1.9 20.3 1.9 19.5 V14 C3.6 13.7 3.6 11.2 1.9 10.9 V5.5 C1.9 4.7 2.4 4.2 3.2 4.2 Z" fill="none" stroke="#fff" stroke-width="2.2" stroke-linejoin="round"/></svg>
<div class="a " style="left:1184.2px;top:36.8px;width:1px;height:10.6px;background:#0c3a73;"></div>
<svg class="a" style="left:1197.5px;top:36.5px" width="13.2" height="11.6" viewBox="0 0 20 19.5" preserveAspectRatio="none"><path d="M10 1.6 L12.5 7.2 L18.6 7.8 L14 11.9 L15.3 17.9 L10 14.8 L4.7 17.9 L6 11.9 L1.4 7.8 L7.5 7.2 Z" fill="none" stroke="#fff" stroke-width="2.3" stroke-linejoin="round"/><path d="M12.6 3.4 L14 1.2" stroke="#fff" stroke-width="1.6"/></svg>
<div class="a " style="left:1221.4px;top:36.8px;width:1px;height:10.6px;background:#0c3a73;"></div>
<svg class="a" style="left:1234.3px;top:35.5px" width="13.2" height="13.2" viewBox="0 0 26 26"><defs><clipPath id="av"><circle cx="13" cy="13" r="13"/></clipPath></defs><g clip-path="url(#av)"><rect width="26" height="26" fill="#2b2324"/><ellipse cx="16" cy="11.5" rx="5.4" ry="6.2" fill="#c99a82"/><path d="M9.5 8.5 C10.5 3 20 2 22.5 8 C19 5.5 13.5 6 9.5 8.5Z" fill="#3a2a26"/><ellipse cx="10" cy="24" rx="10.5" ry="7" fill="#e6e4e6"/><ellipse cx="15.5" cy="16.4" rx="3" ry="1.6" fill="#b98670"/></g></svg>
<div class="a " style="left:1264.2px;top:37.2px;width:2px;height:2px;background:#ffffff;border-radius:50%;"></div>
<div class="a " style="left:1264.2px;top:41px;width:2px;height:2px;background:#ffffff;border-radius:50%;"></div>
<div class="a " style="left:1264.2px;top:44.8px;width:2px;height:2px;background:#ffffff;border-radius:50%;"></div>
</header>
<footer class="g" id="taskbar" aria-label="Windows taskbar">
<div class="a " style="left:0px;top:688px;width:1280px;height:32px;background:#1f1f1c;"></div>
<svg class="a" style="left:440.2px;top:696.2px" width="16" height="15.8" viewBox="0 0 16 15.8"><defs><linearGradient id="wl" x1="0" y1="0" x2="1" y2="1"><stop offset="0" stop-color="#74d2fb"/><stop offset="1" stop-color="#1f9ee8"/></linearGradient></defs><rect x="0" y="0" width="7.6" height="7.5" rx=".6" fill="url(#wl)"/><rect x="8.4" y="0" width="7.6" height="7.5" rx=".6" fill="url(#wl)"/><rect x="0" y="8.3" width="7.6" height="7.5" rx=".6" fill="url(#wl)"/><rect x="8.4" y="8.3" width="7.6" height="7.5" rx=".6" fill="url(#wl)"/></svg>
<div class="a " style="left:464.8px;top:693.2px;width:146.4px;height:21.6px;background:#393937;border-radius:10.8px;"></div>
<div class="a " style="left:575px;top:694.2px;width:36px;height:19.6px;background:#51514c;border-radius:9.8px;"></div>
<svg class="a" style="left:472px;top:699.2px" width="11" height="11" viewBox="0 0 22 22"><circle cx="9" cy="9" r="7.2" fill="none" stroke="#e4e4e4" stroke-width="2.2"/><path d="M14.4 14.4 L20.4 20.4" stroke="#e4e4e4" stroke-width="2.4" stroke-linecap="round"/></svg>
<span class="t" style="left:489.4px;top:698px;font-size:9.8px;line-height:14px;color:#dcdcda;letter-spacing:-0.77px;">Search</span>
<svg class="a" style="left:584px;top:697.4px" width="15.4" height="12.4" viewBox="0 0 31 25"><path d="M10.5 5 V2.6 C10.5 1.4 11.2 1 12.2 1 H18.8 C19.8 1 20.5 1.4 20.5 2.6 V5" fill="none" stroke="#8a5a12" stroke-width="2"/><rect x="0.5" y="5" width="30" height="19.5" rx="2.4" fill="#d88a14"/><path d="M0.5 7.4 C0.5 6 1.4 5 2.9 5 H28.1 C29.6 5 30.5 6 30.5 7.4 V13 C22 16.6 9 16.6 0.5 13 Z" fill="#f0a928"/><rect x="13.6" y="13" width="3.8" height="3.6" rx=".8" fill="#fff3d6"/></svg>
<svg class="a" style="left:619.2px;top:696px" width="16.4" height="16.4" viewBox="0 0 33 33"><defs><linearGradient id="cp1" x1="0" y1="0" x2="0.3" y2="1"><stop offset="0" stop-color="#3a9df2"/><stop offset=".55" stop-color="#4fc879"/><stop offset="1" stop-color="#f2cf3a"/></linearGradient><linearGradient id="cp2" x1="0" y1="0" x2="0.4" y2="1"><stop offset="0" stop-color="#8a6cf0"/><stop offset=".6" stop-color="#e860b4"/><stop offset="1" stop-color="#f39a4a"/></linearGradient></defs><path d="M9 2 H17 C19 2 20 3.2 19.4 5 L14 22 C13.4 24 12 25 10 25 H4 C2 25 1 23.6 1.6 22 L6.4 5 C6.9 3.2 7.4 2 9 2 Z" fill="url(#cp1)"/><path d="M21 7 H28 C30.4 7 31.4 8.6 30.8 10.6 L26.4 25 C25.8 27 24.4 28 22.4 28 H15 C13 28 12.4 26.8 13 25 L17.6 10 C18.2 8 19 7 21 7 Z" fill="url(#cp2)"/><rect x="8.6" y="22.4" width="23.4" height="9.6" rx="2.6" fill="#f7cb2c" stroke="#2a2000" stroke-width="1"/></svg>
<span class="t" style="left:625.4px;top:706.6px;font-size:4.3px;line-height:6px;color:#2a2000;font-weight:700;-webkit-text-stroke:0;letter-spacing:-0.32px;">PRE</span>
<svg class="a" style="left:648.4px;top:696.2px" width="17.2" height="15.2" viewBox="0 0 17.2 15.2"><rect x="0.2" y="4.8" width="12" height="10.2" rx="1.2" fill="#7b7b7b"/><rect x="4.6" y="0.2" width="12.4" height="10.6" rx="1.2" fill="#eeeeee"/><rect x="4.6" y="4.8" width="7.6" height="6" fill="#bdbdbd"/></svg>
<svg class="a" style="left:677.6px;top:696.2px" width="16.6" height="15.2" viewBox="0 0 33 30"><path d="M1 4 C1 2.4 2 1.4 3.6 1.4 H11 L14.6 5 H29.4 C31 5 32 6 32 7.6 V10 H1 Z" fill="#e9a52c"/><rect x="1" y="7.4" width="31" height="21.6" rx="2" fill="#fcd24d"/><path d="M8.4 19.6 H24.6 V29 H8.4 Z" fill="#2f8be0"/><path d="M1 25 H32 V27 C32 28.2 31.2 29 30 29 H3 C1.8 29 1 28.2 1 27 Z" fill="#e8b530" opacity=".0"/></svg>
<svg class="a" style="left:706.8px;top:695.8px" width="16.4" height="16.4" viewBox="-10 -10 20 20"><defs><clipPath id="ch1"><circle r="10"/></clipPath></defs><g clip-path="url(#ch1)"><path d="M0 0 L-8.66 -5 L-20 -20 L20 -20 L20 -5 L8.66 -5 Z" fill="#e84335"/><path d="M0 0 L8.66 -5 L20 -5 L20 20 L0 20 L0 10 Z" fill="#fbc116"/><path d="M0 0 L0 10 L0 20 L-20 20 L-20 -20 L-8.66 -5 Z" fill="#2ea24f"/></g><circle r="4.6" fill="#ffffff"/><circle r="3.6" fill="#3b82ee"/></svg>
<svg class="a" style="left:738.4px;top:696.2px" width="13" height="15.2" viewBox="0 0 26 30"><rect x="0.5" y="1" width="25" height="28.4" rx="2" fill="#d9822b"/><rect x="0.5" y="1" width="25" height="25" rx="2" fill="#4fc0f2"/><rect x="3" y="1" width="20" height="2.6" fill="#2a7fb8"/><path d="M3.6 8 H22.4 M3.6 12.6 H22.4 M3.6 17.2 H22.4 M3.6 21.8 H22.4" stroke="#d7f1fd" stroke-width="2.2"/></svg>
<div class="a " style="left:742.6px;top:715.1px;width:4px;height:1.5px;background:#8c8c8a;border-radius:.75px;"></div>
<svg class="a" style="left:766px;top:696.2px" width="15.6" height="15.6" viewBox="0 0 31 31"><circle cx="15.5" cy="15.5" r="15.4" fill="#ffffff"/><rect x="7" y="12.4" width="9" height="3.4" rx="1.7" fill="#36c5f0"/><rect x="12.6" y="6.6" width="3.4" height="6" rx="1.7" fill="#36c5f0"/><rect x="15.8" y="7" width="3.4" height="9" rx="1.7" fill="#2eb67d"/><rect x="19" y="12.6" width="6" height="3.4" rx="1.7" fill="#2eb67d"/><rect x="15.6" y="15.8" width="9" height="3.4" rx="1.7" fill="#ecb22e"/><rect x="15.6" y="19" width="3.4" height="6" rx="1.7" fill="#ecb22e"/><rect x="12.4" y="15.6" width="3.4" height="9" rx="1.7" fill="#e01e5a"/><rect x="6.6" y="15.6" width="6" height="3.4" rx="1.7" fill="#e01e5a"/></svg>
<div class="a " style="left:775.6px;top:693.4px;width:9px;height:9px;background:#d6214f;border-radius:50%;"></div>
<span class="t" style="left:778.5px;top:693.9px;font-size:6px;line-height:8px;color:#ffffff;font-weight:700;-webkit-text-stroke:0;">9</span>
<div class="a " style="left:771.6px;top:715.1px;width:4px;height:1.5px;background:#8c8c8a;border-radius:.75px;"></div>
<div class="a " style="left:790px;top:690.6px;width:26.4px;height:27.2px;background:#2d2d2b;border-radius:2.6px;"></div>
<svg class="a" style="left:795.0px;top:695.8px" width="16.4" height="16.4" viewBox="-10 -10 20 20"><defs><clipPath id="ch2"><circle r="10"/></clipPath></defs><g clip-path="url(#ch2)"><path d="M0 0 L-8.66 -5 L-20 -20 L20 -20 L20 -5 L8.66 -5 Z" fill="#e84335"/><path d="M0 0 L8.66 -5 L20 -5 L20 20 L0 20 L0 10 Z" fill="#fbc116"/><path d="M0 0 L0 10 L0 20 L-20 20 L-20 -20 L-8.66 -5 Z" fill="#2ea24f"/></g><circle r="4.6" fill="#ffffff"/><circle r="3.6" fill="#3b82ee"/></svg>
<svg class="a" style="left:806.6px;top:693.8px" width="7" height="7" viewBox="0 0 14 14"><circle cx="7" cy="7" r="7" fill="#e8ded6"/><circle cx="7" cy="5.4" r="3" fill="#9a6a52"/><path d="M1.6 12 C3 8 11 8 12.4 12 Z" fill="#56606c"/></svg>
<div class="a " style="left:797.8px;top:714.9px;width:10.8px;height:1.7px;background:#55bdf2;border-radius:.85px;"></div>
<svg class="a" style="left:824.4px;top:695.8px" width="16.6" height="16.6" viewBox="0 0 33 33"><circle cx="16.5" cy="16.5" r="16.4" fill="#57d180"/><rect x="8.4" y="9.4" width="16.2" height="12" rx="1.4" fill="none" stroke="#b5f0c8" stroke-width="2"/><path d="M13 25 H20 M16.5 21.4 V25 M13.6 13 L19.4 18 M19.4 13 L13.6 18" stroke="#b5f0c8" stroke-width="1.8"/></svg>
<div class="a " style="left:830.8px;top:715.1px;width:4px;height:1.5px;background:#8c8c8a;border-radius:.75px;"></div>
<svg class="a" style="left:1123.8px;top:701.6px" width="8.6" height="5" viewBox="0 0 8.6 5"><path d="M0.8 4.2 L4.3 0.9 L7.8 4.2" fill="none" stroke="#ffffff" stroke-width="1.2" stroke-linecap="round" stroke-linejoin="round"/></svg>
<svg class="a" style="left:1144.8px;top:698.2px" width="9" height="11.4" viewBox="0 0 18 23"><rect x="5.8" y="1" width="6.4" height="12.6" rx="3.2" fill="#27536a" stroke="#6cc0e0" stroke-width="1.6"/><path d="M2 10.6 C2 19 16 19 16 10.6 M9 17.4 V21.6" fill="none" stroke="#6cc0e0" stroke-width="1.8" stroke-linecap="round"/></svg>
<svg class="a" style="left:1164.8px;top:699.2px" width="11.6" height="9" viewBox="0 0 23 18"><path d="M1.4 6.4 C7 0.6 16 0.6 21.6 6.4" fill="none" stroke="#fff" stroke-width="1.9" stroke-linecap="round"/><path d="M4.8 9.8 C8.6 6 14.4 6 18.2 9.8" fill="none" stroke="#fff" stroke-width="1.9" stroke-linecap="round"/><path d="M8.2 13.2 C10 11.4 13 11.4 14.8 13.2" fill="none" stroke="#fff" stroke-width="1.9" stroke-linecap="round"/><circle cx="11.5" cy="16" r="1.5" fill="#fff"/></svg>
<svg class="a" style="left:1180.8px;top:698.8px" width="11.8" height="10.4" viewBox="0 0 24 21"><path d="M1.4 7.4 H5 L10 2.6 V18.4 L5 13.6 H1.4 Z" fill="none" stroke="#fff" stroke-width="1.7" stroke-linejoin="round"/><path d="M13.4 7.4 C15 9 15 12 13.4 13.6 M16.4 4.8 C19.6 8 19.6 13 16.4 16.2 M19.4 2.2 C24 7 24 14 19.4 18.8" fill="none" stroke="#fff" stroke-width="1.6" stroke-linecap="round"/></svg>
<svg class="a" style="left:1196.8px;top:698.6px" width="11.8" height="9.4" viewBox="0 0 24 19"><rect x="1" y="4.4" width="19.6" height="12.6" rx="2.6" fill="#f2f2f2"/><rect x="21" y="8.2" width="2.4" height="5" rx="1" fill="#f2f2f2"/><path d="M3 1 L8.6 6.4 L2 9.4 Z" fill="#f2f2f2"/><path d="M5.6 11 H16" stroke="#1f1f1c" stroke-width="1.4" opacity=".5"/></svg>
<span class="t" style="left:1222.6px;top:693.7px;font-size:8.2px;line-height:11px;color:#f2f2f2;letter-spacing:-0.33px;">5:44 PM</span>
<span class="t" style="left:1218.9px;top:703.9px;font-size:8.2px;line-height:11px;color:#f2f2f2;letter-spacing:0.05px;">6/6/2024</span>
<svg class="a" style="left:1256.4px;top:698.8px" width="9.6" height="11.6" viewBox="0 0 19 23"><path d="M9.5 1 C5 1 3 4.6 3 8.6 V13 L0.8 17 C0.6 17.6 0.9 18 1.6 18 H17.4 C18.1 18 18.4 17.6 18.2 17 L16 13 V8.6 C16 4.6 14 1 9.5 1 Z" fill="#77d4f4"/><path d="M6.6 19.6 C7.4 22.6 11.6 22.6 12.4 19.6 Z" fill="#77d4f4"/></svg>
</footer>
</div>
</body>
</html>
